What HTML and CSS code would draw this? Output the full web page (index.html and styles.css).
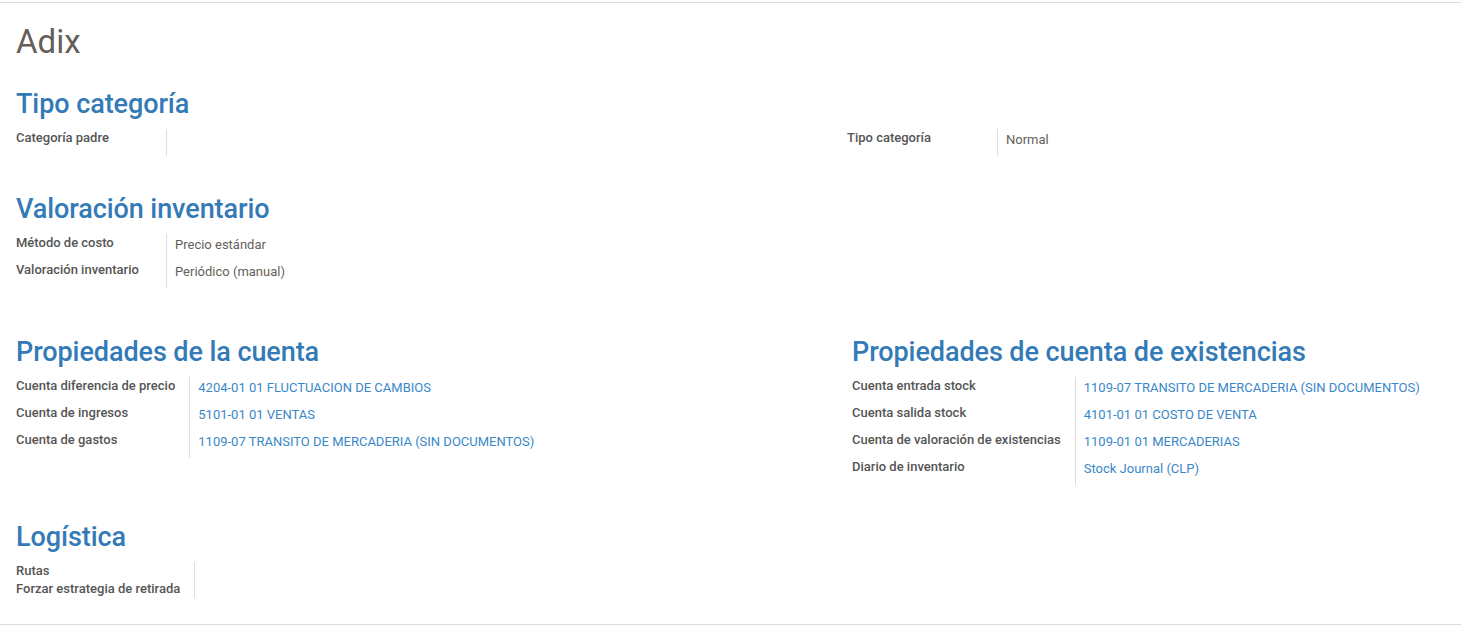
FILE: index.html
```html
<!DOCTYPE html>
<html lang="es">
<head>
<meta charset="utf-8">
<title>Adix</title>
<link rel="stylesheet" href="styles.css">
</head>
<body>
<div class="sheet">
  <h1 class="title">Adix</h1>

  <section class="sec sec-tipo">
    <h2 class="sep">Tipo categoría</h2>
    <div class="grid4">
      <div class="lbl lbl-fixed">Categoría padre</div>
      <div class="val"></div>
      <div class="lbl lbl-fixed">Tipo categoría</div>
      <div class="val">Normal</div>
    </div>
  </section>

  <section class="sec sec-val">
    <h2 class="sep">Valoración inventario</h2>
    <div class="grid2">
      <div class="lbl lbl-fixed">Método de costo</div>
      <div class="val">Precio estándar</div>
      <div class="lbl lbl-fixed">Valoración inventario</div>
      <div class="val">Periódico (manual)</div>
    </div>
  </section>

  <div class="cols sec-props">
    <section class="col">
      <h2 class="sep">Propiedades de la cuenta</h2>
      <div class="grid2">
        <div class="lbl">Cuenta diferencia de precio</div>
        <div class="val"><a class="link">4204-01 01 FLUCTUACION DE CAMBIOS</a></div>
        <div class="lbl">Cuenta de ingresos</div>
        <div class="val"><a class="link">5101-01 01 VENTAS</a></div>
        <div class="lbl">Cuenta de gastos</div>
        <div class="val"><a class="link">1109-07 TRANSITO DE MERCADERIA (SIN DOCUMENTOS)</a></div>
      </div>
    </section>
    <section class="col">
      <h2 class="sep">Propiedades de cuenta de existencias</h2>
      <div class="grid2">
        <div class="lbl">Cuenta entrada stock</div>
        <div class="val"><a class="link">1109-07 TRANSITO DE MERCADERIA (SIN DOCUMENTOS)</a></div>
        <div class="lbl">Cuenta salida stock</div>
        <div class="val"><a class="link">4101-01 01 COSTO DE VENTA</a></div>
        <div class="lbl">Cuenta de valoración de existencias</div>
        <div class="val"><a class="link">1109-01 01 MERCADERIAS</a></div>
        <div class="lbl">Diario de inventario</div>
        <div class="val"><a class="link">Stock Journal (CLP)</a></div>
      </div>
    </section>
  </div>

  <section class="sec sec-log">
    <h2 class="sep">Logística</h2>
    <div class="grid2">
      <div class="lbl">Rutas</div>
      <div class="val"></div>
      <div class="lbl">Forzar estrategia de retirada</div>
      <div class="val"></div>
    </div>
  </section>
</div>
</body>
</html>
```

FILE: styles.css
```css
* { box-sizing: border-box; }

html, body {
  margin: 0;
  padding: 0;
  background: #ffffff;
}

body {
  font-family: Roboto, "Liberation Sans", Arial, sans-serif;
  font-size: 13px;
  color: #666666;
}

.sheet {
  margin-top: 2px;
  border-top: 1px solid #dcdcdc;
  border-bottom: 1px solid #dcdcdc;
  padding: 19px 16px 26px 16px;
}

.title {
  margin: 0;
  font-size: 33px;
  line-height: 40px;
  font-weight: 400;
  color: #665f59;
}

.sep {
  margin: 0 0 8px 0;
  font-size: 27px;
  line-height: 34px;
  font-weight: 500;
  letter-spacing: -0.08px;
  color: #337ab7;
  white-space: nowrap;
}

.sec-tipo { margin-top: 25px; }
.sec-val { margin-top: 36px; }
.sec-props { margin-top: 47px; }
.sec-log { margin-top: 35px; }

.cols {
  display: grid;
  grid-template-columns: 836px 1fr;
}

.grid4 {
  display: grid;
  grid-template-columns: 150px 681px 150px 1fr;
}

.grid2 {
  display: grid;
  grid-template-columns: max-content 1fr;
}

.lbl {
  line-height: 18px;
  padding-right: 14px;
  font-weight: 500;
  color: #555555;
  white-space: nowrap;
}

.lbl-fixed { min-width: 150px; }

.val {
  line-height: 18px;
  padding: 2px 0 7px 8px;
  border-left: 1px solid #dddddd;
  color: #665f59;
  white-space: nowrap;
}

.link {
  color: #3a87c8;
  text-decoration: none;
  cursor: pointer;
}
```
